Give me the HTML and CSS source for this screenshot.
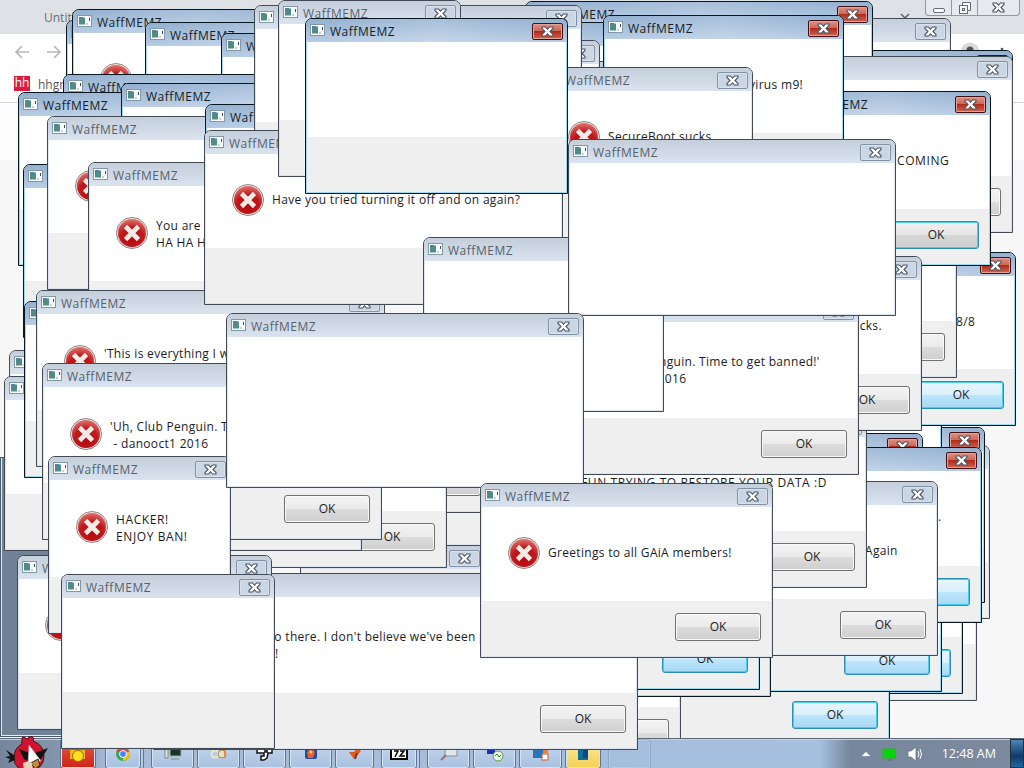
FILE: index.html
```html
<!DOCTYPE html>
<html>
	<head>
		<meta charset="utf-8">
		<title>WaffMEMZ</title>
		<link rel="stylesheet" href="styles.css">
	</head>
	<body>
		<svg class="defs">
			<defs>
				<radialGradient id="red" cx="50%" cy="75%" r="75%">
					<stop offset="0" stop-color="#b80a10"/>
					<stop offset="0.6" stop-color="#c01a1e"/>
					<stop offset="1" stop-color="#e0736c"/>
				</radialGradient>
			</defs>
			<symbol id="error" viewBox="0 0 32 32">
				<circle cx="16" cy="16" r="15.5" fill="#f4e6e4" stroke="#8c8484" stroke-width="1"/>
				<circle cx="16" cy="16" r="14" fill="url(#red)"/>
				<path d="M9.500 9.500L22.500 22.500M22.500 9.500L9.500 22.500" stroke="#f1ebe6" stroke-width="4.6"/>
			</symbol>
			<symbol id="app" viewBox="0 0 15 12">
				<rect x="0.5" y="0.5" width="14" height="11" fill="#fbfcfd" stroke="#8499a6"/>
				<rect x="2" y="2.500" width="6" height="7" fill="#4f8c85"/>
				<rect x="2" y="2" width="4" height="1.500" fill="#5a7fa0"/>
				<path d="M9.500 9h1M12.500 3v3" stroke="#3d4d58"/>
			</symbol>
			<symbol id="cross" viewBox="0 0 13 11">
				<path d="M1 1h3.500L6.500 3.200 8.500 1H12v1.500L9 5.500l3 3V10H8.500L6.500 7.800 4.500 10H1V8.500l3-3-3-3z" fill="#fff" stroke="#4a5563" stroke-width="1.100"/>
			</symbol>
		</svg>

		<div class="desktop" id="desktop">
			<div class="browser">
				<div class="tabstrip">
					<span>Untitled</span>
					<svg class="chevron" width="12" height="8"><path d="M2 2l4 4 4-4" fill="none" stroke="#5b5f64" stroke-width="1.500"/></svg>
					<div class="controls">
						<span><svg width="14" height="14"><rect x="1.500" y="7.500" width="11" height="4" rx="1.500" fill="#fff" stroke="#626a75"/></svg></span>
						<span><svg width="14" height="14"><path d="M4.500 4V1.500h8v8H10" fill="#fff" stroke="#626a75"/><rect x="1.500" y="4.500" width="8" height="8" fill="#fff" stroke="#626a75"/><rect x="4.500" y="7.500" width="2" height="2" fill="none" stroke="#626a75"/></svg></span>
						<span class="wide"><svg width="13" height="11"><use href="#cross"/></svg></span>
					</div>
				</div>
				<div class="toolbar">
					<svg width="16" height="14"><path d="M15 7H2M8 1L2 7l6 6" fill="none" stroke="#b4b6b9" stroke-width="1.700"/></svg>
					<svg width="16" height="14"><path d="M1 7h13M8 1l6 6-6 6" fill="none" stroke="#b4b6b9" stroke-width="1.700"/></svg>
					<svg class="avatar" width="44" height="20"><circle cx="10" cy="10" r="9.500" fill="#d8dadd"/><circle cx="10" cy="8" r="3.500" fill="#4e5257"/><path d="M3 16q7-7 14 0z" fill="#4e5257"/><circle cx="42" cy="7" r="1.300" fill="#4e5257"/></svg>
				</div>
				<div class="bookmarks"><b>hh</b><span>hhgregg</span></div>
				<div class="page"></div>
			</div>
			<div class="slate"></div>

			<div class="taskbar" id="taskbar">
				<svg class="start" width="44" height="34" viewBox="0 0 44 34">
					<path d="M17 8Q16 0 19 1l3 2 3-3q5 1 3 5 11 4 11 15 0 14-16 14Q9 34 9 22 9 12 17 8z" fill="#d0142f" stroke="#47101a"/>
					<path d="M9 19L1 14l4 6-5 1 5 2-2 4 7-3z" fill="#151518"/>
					<path d="M14 13l13 5 16-6-7 11-9 4-8-4z" fill="#111"/>
					<path d="M24 9l12 16-13 2z" fill="#fff" stroke="#aaa" stroke-width="0.500"/>
					<path d="M26 27l7-4 2 6-5 4z" fill="#c48b3c" stroke="#3a2410"/>
					<path d="M18 27q6-3 9 0l1 7h-9z" fill="#e6d5bb"/>
				</svg>
				<div class="tasks">
					<div class="task hot"><svg width="20" height="16"><rect x="2" y="2" width="15" height="9" fill="#f5b323"/><circle cx="10" cy="8" r="5.500" fill="#ffe11f" stroke="#a9660d"/></svg></div>
					<div class="task stack"><svg width="16" height="16"><circle cx="8" cy="6" r="7" fill="#3aa757"/><path d="M8 6L1 3Q8-4 15 4z" fill="#e94335"/><path d="M8 6l7-3q1 8-7 10z" fill="#fbbd05"/><circle cx="8" cy="6" r="3.500" fill="#4285f4" stroke="#fff"/></svg></div>
					<div class="task"><svg width="18" height="16"><rect x="6" y="0" width="11" height="8" fill="#163627" stroke="#9fae9f"/><path d="M1 1h3v9H1zM7 11h8" fill="#dfe8dd" stroke="#7a8c7a"/></svg></div>
					<div class="task"><svg width="18" height="16"><circle cx="5" cy="6" r="3.500" fill="none" stroke="#f1e9c8" stroke-width="2"/><circle cx="12" cy="6" r="4" fill="#e9dfc0" stroke="#a98c55"/><path d="M15 1v9" stroke="#e98a3a" stroke-width="2"/></svg></div>
					<div class="task"><svg width="18" height="16"><path d="M1 1h8v3h2V1h5v4h-4l-1 5-3 2H5V8h3V5H1z" fill="#fff" stroke="#111" stroke-width="1.500"/></svg></div>
					<div class="task"><svg width="14" height="16"><rect x="1" y="0" width="12" height="11" rx="2" fill="#264a9b"/><path d="M3 4l4-4 4 4-2 6H4z" fill="#e8602c"/><circle cx="7" cy="4" r="1.500" fill="#ffd45a"/></svg></div>
					<div class="task short"><svg width="16" height="16"><path d="M2 4l5 7 7-8-4-3-3 4z" fill="#e3571b"/><path d="M8 11l2-6" stroke="#7a3a18" stroke-width="2"/></svg></div>
					<div class="task stack"><svg width="18" height="16"><rect x="1" y="0" width="16" height="11" fill="#fff" stroke="#000" stroke-width="2"/><path d="M4 3h4l-3 6M10 3h4l-4 5h5" fill="none" stroke="#000" stroke-width="1.500"/></svg></div>
					<div class="task"><svg width="18" height="16"><rect x="5" y="0" width="12" height="8" fill="#e1e5e9" stroke="#868f9a"/><path d="M1 12l5-5" stroke="#a66" stroke-width="2"/></svg></div>
					<div class="task"><svg width="18" height="16"><rect x="1" y="0" width="8" height="6" fill="#1d2fae"/><circle cx="12" cy="8" r="5" fill="#eef7ea" stroke="#53a03d"/><path d="M9 8l2-2 2 3 2-2" fill="none" stroke="#348328"/></svg></div>
					<div class="task"><svg width="18" height="16"><rect x="1" y="0" width="10" height="10" fill="#2b74ba"/><path d="M11 0h5v5h-5z" fill="#ec8330"/><rect x="10" y="6" width="6" height="6" fill="#fff" stroke="#d3562b"/></svg></div>
					<div class="task yellow"><svg width="14" height="16"><path d="M2 0h10v12H2z" fill="#0d6d9c"/><path d="M7 0h5v10H7z" fill="#0a4a80"/></svg></div>
					<div class="task ghost"></div>
				</div>
				<div class="tray">
					<svg width="10" height="6"><path d="M0 5.500L5 0.500l5 5z" fill="#fff" stroke="#5c6b7d" stroke-width="0.500"/></svg>
					<svg width="14" height="14"><path d="M5 11h5v3H5z" fill="#6b7783"/><rect x="0.500" y="1.500" width="13" height="10" fill="#08d40c" stroke="#4c9c58"/></svg>
					<svg width="17" height="16"><path d="M1 5h3l5-4v14l-5-4H1z" fill="#fff" stroke="#5c6b7d" stroke-width="0.700"/><path d="M11 5q2 3 0 6M13 3q3 5 0 10" fill="none" stroke="#fff"/></svg>
					<span class="clock">12:48 AM</span>
				</div>
				<div class="peek"></div>
			</div>
		</div>
		<script src="windows.js"></script>
	</body>
</html>
```
FILE: styles.css
```css
body {
	margin: 0;
	overflow: hidden;
	font: 12px "Open Sans", "Noto Sans", sans-serif;
	color: #1c1c1c;
}
.defs {
	position: absolute;
	width: 0;
	height: 0;
}
.desktop {
	position: relative;
	width: 1024px;
	height: 768px;
	overflow: hidden;
	background: #f8f8f9;
}

/* browser behind everything */
.browser {
	height: 738px;
	display: flex;
	flex-direction: column;
}
.tabstrip {
	height: 34px;
	background: #dee1e5;
	display: flex;
	color: #6a6d71;
}
.tabstrip > span {
	padding: 9px 0 0 44px;
}
.chevron {
	margin: 12px 14px 0 auto;
}
.controls {
	display: flex;
	height: 15px;
	margin-right: 4px;
	border: 1px solid #9297a0;
	border-top: 0;
	border-radius: 0 0 4px 4px;
	background: #e6e9ed;
}
.controls span {
	width: 25px;
	display: flex;
	align-items: center;
	justify-content: center;
	border-right: 1px solid #9297a0;
}
.controls .wide {
	width: 41px;
	border: 0;
}
.toolbar {
	height: 36px;
	background: #fff;
	display: flex;
	align-items: center;
	gap: 16px;
	padding: 0 20px 0 14px;
}
.avatar {
	margin-left: auto;
}
.bookmarks {
	height: 32px;
	background: #fff;
	border-bottom: 1px solid #d5d7da;
	display: flex;
	gap: 8px;
	padding-left: 14px;
	color: #55585c;
	line-height: 29px;
}
.bookmarks b {
	width: 16px;
	height: 15px;
	margin-top: 6px;
	background: #dc1b3c;
	color: #fff;
	font: 12px/14px "Open Sans", sans-serif;
	text-align: center;
}
.page {
	flex: 1;
	background: linear-gradient(#fdfdfd 0, #fdfdfd 57px, #f7f7f8 57px);
}
.slate {
	position: absolute;
	left: 0;
	top: 457px;
	width: 240px;
	height: 280px;
	box-sizing: border-box;
	background: #718198;
	border: 1px solid #4b596b;
	box-shadow: inset 1px -1px 0 #e8edf2;
}

/* message boxes */
.win {
	position: absolute;
	box-sizing: border-box;
	display: flex;
	flex-direction: column;
	border: 1px solid #414a55;
	border-radius: 7px 7px 0 0;
	background: #dbe4ef;
	padding: 0 1px 1px;
	overflow: hidden;
	box-shadow: inset 0 1px 0 #e9eff6;
}
.win.active {
	border-color: #08161f;
	background: #9fd9ef;
	box-shadow: inset 0 1px 0 #d3e2f1;
}
.bar {
	flex: none;
	height: 23px;
	box-sizing: border-box;
	margin: 0 -1px;
	padding: 4px 4px 0;
	display: flex;
	background: linear-gradient(#c4cfdb, #dae3ef);
	color: #56616d;
}
.active .bar {
	background: linear-gradient(90deg, rgba(255,255,255,0), rgba(255,255,255,0.2), rgba(255,255,255,0)), linear-gradient(#92afd0, #b6cce4);
	color: #161d26;
}
.app {
	width: 15px;
	height: 12px;
	margin: 1px 5px 0 0;
}
.title {
	flex: 1;
	font-size: 12px;
	line-height: 17px;
	letter-spacing: 0.520px;
	white-space: nowrap;
}
.close {
	box-sizing: border-box;
	width: 31px;
	height: 17px;
	border: 1px solid #8391a5;
	border-radius: 2px;
	background: #cbd6e4;
	box-shadow: inset 0 0 0 1px #d9e2ec;
	display: flex;
	align-items: center;
	justify-content: center;
}
.close svg {
	width: 13px;
	height: 11px;
}
.active .close {
	border-color: #401016;
	background: linear-gradient(#dd9284, #cb6555 48%, #b12b1c 50%, #d0654f);
	box-shadow: inset 0 0 0 1px #e3a295;
}
.content {
	flex: 1;
	background: #fff;
	display: flex;
	overflow: hidden;
}
.error {
	flex: none;
	width: 32px;
	height: 32px;
	margin: 30px 8px 0 26px;
}
.msg {
	flex: none;
	white-space: pre;
	line-height: 17px;
	letter-spacing: 0.310px;
	padding-top: 37px;
}
.two .error {
	margin-top: 31px;
}
.two .msg {
	padding-top: 31px;
}
.caps .msg {
	letter-spacing: 0.600px;
}
.foot {
	flex: none;
	height: 55px;
	background: #efefef;
	display: flex;
	justify-content: flex-end;
}
.ok {
	box-sizing: border-box;
	width: 86px;
	height: 28px;
	margin: 12px 10px 0 0;
	border: 1px solid #707070;
	border-radius: 3px;
	background: linear-gradient(#f3f3f3, #ebebeb 49%, #dcdcdc 50%, #cfcfcf);
	box-shadow: inset 0 0 0 1px #fafafa;
	text-align: center;
	line-height: 26px;
}
.active .ok {
	border-color: #2d8fb5;
	background: linear-gradient(#eaf6fd, #d9f0fc 49%, #bde6fd 50%, #a7d9f5);
	box-shadow: inset 0 0 0 1px #46cdf2;
}
.active.plain .ok {
	background: linear-gradient(#f0f0f0, #e5e5e5 49%, #d6d6d6 50%, #cfcfcf);
}

/* taskbar */
.taskbar {
	position: absolute;
	left: 0;
	top: 738px;
	z-index: 100;
	width: 1024px;
	height: 30px;
	box-sizing: border-box;
	border-top: 1px solid #5d6977;
	display: flex;
	background: linear-gradient(90deg, #75869c 0, #8496ad 60px, #a5bbd8 110px, #a5bfdf 820px, #76879d 850px, #7d8a9f 1024px);
	box-shadow: inset 0 1px 0 #c3d0e0;
}
.start {
	margin: -3px 11px 0 5px;
}
.tasks {
	display: flex;
	gap: 3px;
}
.task {
	box-sizing: border-box;
	width: 43px;
	height: 30px;
	border: 1px solid #5b7593;
	border-radius: 3px;
	background: linear-gradient(#c6d8ee, #a9c1df);
	box-shadow: inset 0 0 0 1px #d5e3f3;
	display: flex;
	justify-content: center;
	padding-top: 8px;
}
.short {
	width: 39px;
	margin-right: 4px;
}
.stack {
	width: 36px;
	margin-right: 7px;
	box-shadow: inset 0 0 0 1px #d5e3f3, 2px 0 0 #b9cde6, 3px 0 0 #5b7593;
}
.hot {
	width: 36px;
	margin-right: 6px;
	background: linear-gradient(#e05a48, #cf2418);
}
.yellow {
	width: 36px;
	margin-right: 4px;
	background: linear-gradient(#fbe9a3, #f6cf55);
}
.ghost {
	background: none;
	opacity: 0.3;
}
.tray {
	margin-left: auto;
	display: flex;
	align-items: center;
	gap: 11px;
	color: #fff;
}
.clock {
	margin: 0 14px 0 7px;
	font-size: 12.500px;
}
.peek {
	box-sizing: border-box;
	width: 14px;
	border: 1px solid #20303f;
	background: linear-gradient(#4f86b5, #0e3a68 60%, #1c6aa0);
}
```
FILE: windows.js
```js
// left, top, right, bottom, classes, message, ok button
// back to front, the "front" ones hang over the taskbar
var A = 'active', I = '';
var wins = [
	[66, 20, 300, 194, A],
	[72, 9, 330, 183, A, 'Virus'],
	[145, 22, 400, 196, A, ' '],
	[221, 33, 470, 207, A],
	[63, 74, 300, 248, A],
	[18, 92, 280, 266, A],
	[121, 83, 380, 257, A],
	[23, 164, 260, 338, A],
	[47, 116, 300, 290, I, ' '],
	[205, 104, 440, 278, A],
	[88, 162, 340, 338, 'two', 'You are an idiot!\nHA HA HA HA'],
	// right side, top
	[700, 18, 951, 192, I],
	[740, 50, 1013, 224, A],
	[525, 1, 873, 176, A],
	[740, 56, 1013, 233, I, '', 1],
	[360, 22, 640, 196, A],
	[400, 61, 640, 235, I],
	[340, 40, 600, 214, I],
	[254, 5, 582, 179, I],
	[860, 445, 990, 619, I],
	[840, 427, 985, 603, A],
	[760, 390, 942, 575, A],
	[760, 252, 1016, 426, A, ['8/8', 956], 1],
	[700, 203, 957, 378, I, '', 1],
	[778, 91, 991, 266, 'active plain caps', ['COMING', 897], 1],
	[603, 15, 844, 190, A, ['virus m9!', 749]],
	[540, 67, 753, 241, I, 'SecureBoot sucks.'],
	// right side, bottom
	[760, 433, 923, 608, A],
	[760, 540, 977, 701, I],
	[740, 518, 963, 694, A, '', 1],
	[679, 571, 890, 746, A, '', 1],
	[700, 516, 942, 692, A, '', 1],
	[700, 447, 982, 623, A, ['.', 938], 1],
	[700, 481, 938, 656, I, ['Again', 865], 1],
	[500, 589, 681, 764, I, '', 1],
	[500, 522, 771, 697, A],
	[500, 515, 760, 690, A, '', 1],
	[500, 413, 867, 588, 'caps', ['FUN TRYING TO RESTORE YOUR DATA :D', 581], 1],
	[700, 256, 922, 431, I, ['sucks.', 846], 1],
	[520, 298, 859, 475, 'two', "'Uh, Club Penguin. Time to get banned!'\n - danooct1 2016", 1],
	// left side
	[9, 350, 300, 500, I],
	[300, 545, 485, 600, I],
	[300, 371, 560, 546, I],
	[300, 338, 493, 513, I, '', 1],
	[200, 391, 447, 568, I, '', 1],
	[4, 376, 362, 551, I],
	[24, 301, 300, 478, A],
	[36, 290, 385, 467, 'two', "'This is everything I wanted'", 1],
	[42, 363, 382, 540, 'two', "'Uh, Club Penguin. Time to get banned!'\n - danooct1 2016", 1],
	[204, 130, 563, 305, I, 'Have you tried turning it off and on again?'],
	[423, 237, 664, 412, 'blank'],
	[278, 0, 461, 177, I],
	[305, 18, 568, 194, A],
	[568, 139, 896, 316, 'blank'],
	[153, 573, 638, 750, 'two front', "Well, hello there. I don't believe we've been properly introduced.\nI'm Bonzi!", 1],
	[17, 555, 272, 730, 'front', ' '],
	[48, 456, 231, 634, 'two caps front', 'HACKER!\nENJOY BAN!'],
	[226, 313, 584, 488, 'blank front'],
	[61, 574, 275, 749, 'front'],
	[480, 483, 773, 658, 'front', 'Greetings to all GAiA members!', 1]
];

var desktop = document.getElementById('desktop');
wins.forEach(function (w, i) {
	var el = document.createElement('div');
	el.className = 'win ' + w[4];
	el.style.left = w[0] + 'px';
	el.style.top = w[1] + 'px';
	el.style.width = (w[2] - w[0]) + 'px';
	el.style.height = (w[3] - w[1]) + 'px';
	el.style.zIndex = w[4].indexOf('front') > -1 ? i + 101 : i + 1;

	var html = '<div class="bar"><svg class="app"><use href="#app"/></svg><span class="title">WaffMEMZ</span>' +
		'<span class="close"><svg><use href="#cross"/></svg></span></div><div class="content">';
	var msg = w[5];
	if (Array.isArray(msg)) {
		// partly covered text, only the visible tail is placed
		html += '<span class="msg" style="margin-left:' + (msg[1] - w[0] - 2) + 'px">' + msg[0] + '</span>';
	} else if (msg) {
		html += '<svg class="error"><use href="#error"/></svg><span class="msg">' + msg + '</span>';
	}
	html += '</div>';
	if (w[4].indexOf('blank') < 0) {
		html += '<div class="foot">' + (w[6] ? '<span class="ok">OK</span>' : '') + '</div>';
	}
	el.innerHTML = html;
	desktop.appendChild(el);
});
```
